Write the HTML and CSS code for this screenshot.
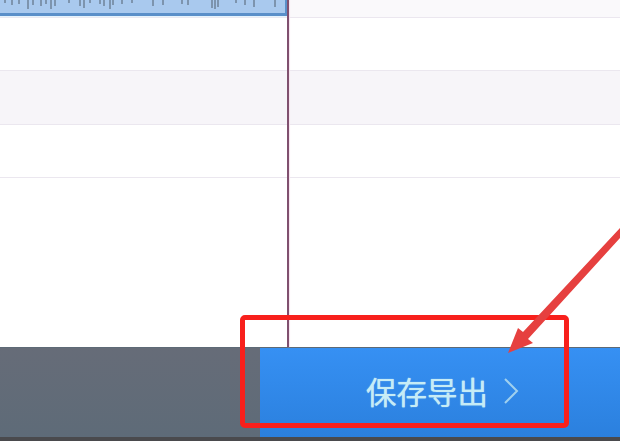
FILE: index.html
```html
<!DOCTYPE html>
<html lang="zh-CN">
<head>
  <meta charset="UTF-8">
  <meta name="viewport" content="width=device-width, initial-scale=1.0">
  <title>保存导出</title>
  <link rel="stylesheet" href="styles.css">
</head>
<body>

<div id="editor">
  <div class="timeline">
    <div class="track track-first">
      <div class="clip">
        <svg class="wave" width="285" height="13" viewBox="0 0 285 13">
          <path d="M5 0v3M12 0v5M19 0v4M28 0v9M33 0v5M41 0v6M46 0v4M51 0v9M55 0v6M69 0v3M80 0v6M84 0v8M90 0v3M100 0v4M104 0v6M110 0v9M113 0v5M122 0v4M132 0v3M153 0v6M163 0v5M182 0v4M188 0v5M212 0v8M215 0v9M218 0v7M236 0v3M245 0v5M254 0v7M275 0v7"/>
        </svg>
      </div>
    </div>
    <div class="track"></div>
    <div class="track track-alt"></div>
    <div class="track"></div>
    <div class="track track-last"></div>
    <div class="playhead"></div>
  </div>

  <div class="footer">
    <div class="footer-left"></div>
    <button class="save-btn"><span class="save-label">保存导出</span>
      <svg class="chevron" width="16" height="28" viewBox="0 0 16 28"><path d="M2 2l12 12-12 12"/></svg>
    </button>
  </div>
  <div class="bottom-strip"></div>

  <div class="mark-box"></div>
  <svg class="mark-arrow" width="130" height="160" viewBox="0 0 130 160">
    <path d="M130 18L33 122l-5-4-10 25 25-10-5-4 92-101z"/>
  </svg>
</div>

</body>
</html>
```

FILE: styles.css
```css
body {
  margin: 0;
  font-family: "Noto Sans CJK SC", "Liberation Sans", sans-serif;
}

#editor {
  position: relative;
  display: flex;
  flex-direction: column;
  width: 620px;
  height: 441px;
  overflow: hidden;
  background-color: #fff;
}

.timeline {
  position: relative;
  flex: 1;
  display: flex;
  flex-direction: column;
}

.track {
  height: 52px;
  border-bottom: 1px solid #ebe7ef;
}

.track-first {
  height: 17px;
  background-color: #faf9fb;
}

.track-alt {
  height: 53px;
  background-color: #f7f5f9;
}

.track-last {
  flex: 1;
  border-bottom: 0;
}

.clip {
  width: 285px;
  height: 13px;
  background-color: #a9c9ee;
  border-right: 3px solid #5a8fc9;
  border-bottom: 3px solid #5a8fc9;
  box-shadow: 0 1px 1px #e4f3fd;
}

.wave {
  display: block;
  filter: blur(0.4px);
}

.wave path {
  fill: none;
  stroke: #6f8299;
  stroke-width: 1.5;
}

.playhead {
  position: absolute;
  left: 287px;
  top: 0;
  bottom: 0;
  width: 2px;
  background-color: #80506f;
  box-shadow: 1px 0 1px #f8e4ef;
}

.footer {
  display: flex;
  height: 90px;
  border-top: 1px solid #5e6a76;
  box-sizing: border-box;
}

.footer-left {
  width: 260px;
  background: linear-gradient(#666c78, #5e6b78);
}

.save-btn {
  flex: 1;
  display: flex;
  align-items: center;
  gap: 15px;
  padding: 0 0 4px 106px;
  border: 0;
  color: #c6ecf6;
  font-family: inherit;
  font-size: 30.5px;
  background: linear-gradient(#3690f3, #2b80de);
}

.save-label {
  text-shadow: 0 0 1px #c6ecf6;
}

.chevron path {
  fill: none;
  stroke: #9fd0ee;
  stroke-width: 2;
}

.bottom-strip {
  height: 4px;
  background-color: #4a4a4d;
}

.mark-box {
  position: absolute;
  left: 240px;
  top: 315px;
  width: 319px;
  height: 103px;
  border: 5px solid #f8201c;
  border-radius: 5px;
}

.mark-arrow {
  position: absolute;
  left: 490px;
  top: 210px;
  filter: blur(0.5px);
}

.mark-arrow path {
  fill: #e6403f;
}
```
